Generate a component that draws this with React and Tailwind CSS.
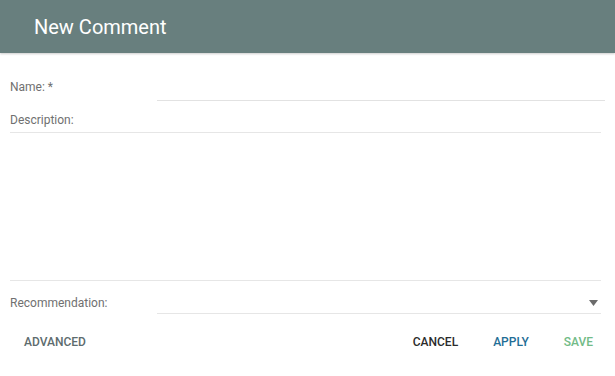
import React from 'react';

export default function App() {
  return (
    <div className="w-[615px] h-[376px] bg-white font-['Roboto',sans-serif] overflow-hidden">
      {/* Header */}
      <div className="h-[53px] bg-[#687f7e] flex items-center pl-[34px] shadow-[0_1px_2px_rgba(0,0,0,0.2)]">
        <h1 className="text-[20px] font-normal text-white">New Comment</h1>
      </div>

      <div className="px-[10px]">
        {/* Name */}
        <div className="flex items-end mt-[16px] h-[32px]">
          <span className="w-[147px] text-[12px] text-[#707070] self-start pt-[11px] leading-[15px]">Name: *</span>
          <div className="flex-1 h-full border-b border-[#e2e2e2]"></div>
        </div>

        {/* Description */}
        <div className="pt-[12px] pb-[4px] text-[12px] text-[#707070] leading-[15px]">Description:</div>
        <div className="h-[149px] border-y border-[#e6e6e6] mr-[4px]"></div>

        {/* Recommendation */}
        <div className="flex h-[33px]">
          <span className="w-[147px] text-[12px] text-[#707070] pt-[15px] leading-[15px]">Recommendation:</span>
          <div className="flex-1 border-b border-[#e6e6e6] mr-[4px] flex items-end justify-end pb-[7px] pr-[3px]">
            <svg width="9" height="6" viewBox="0 0 9 6">
              <path d="M0 0 H9 L4.5 6 Z" fill="#6b6b6b" />
            </svg>
          </div>
        </div>

        {/* Actions */}
        <div className="flex items-center mt-[19px] text-[12px] font-medium">
          <button className="ml-[14px] text-[#5d6c6e]">ADVANCED</button>
          <button className="ml-auto text-[#2b2b2b]">CANCEL</button>
          <button className="ml-[35px] text-[#1f6e96]">APPLY</button>
          <button className="ml-[35px] mr-[12px] text-[#72bb87]">SAVE</button>
        </div>
      </div>
    </div>
  );
}
